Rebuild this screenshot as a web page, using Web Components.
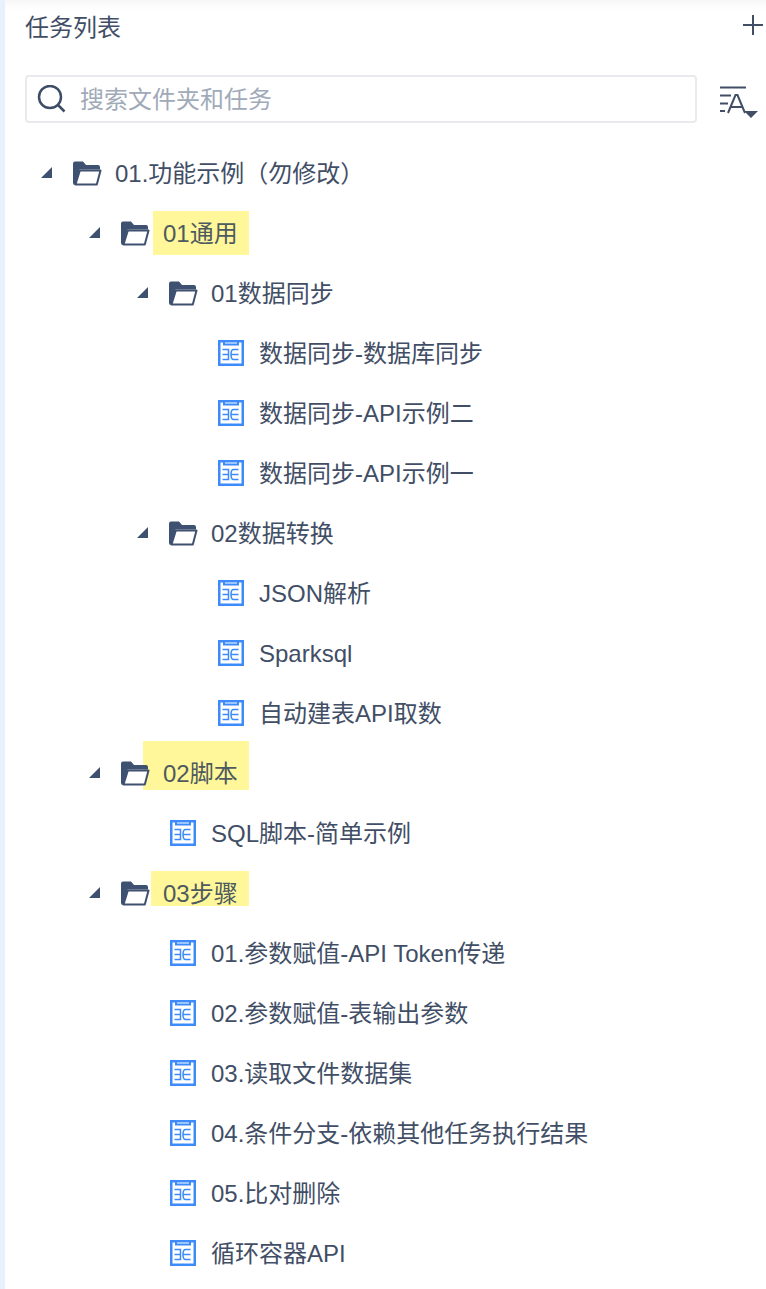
<!DOCTYPE html>
<html lang="zh">
<head>
<meta charset="utf-8">
<style>
  html, body { margin: 0; padding: 0; background: #fff; }
  body { font-family: "Liberation Sans", "Noto Sans CJK SC", sans-serif; }
</style>
</head>
<body>
<task-panel title="任务列表">
  <tree-row kind="folder" depth="0">01.功能示例（勿修改）</tree-row>
  <tree-row kind="folder" depth="1" mark="148,8,96,44">01通用</tree-row>
  <tree-row kind="folder" depth="2">01数据同步</tree-row>
  <tree-row kind="task" depth="3">数据同步-数据库同步</tree-row>
  <tree-row kind="task" depth="3">数据同步-API示例二</tree-row>
  <tree-row kind="task" depth="3">数据同步-API示例一</tree-row>
  <tree-row kind="folder" depth="2">02数据转换</tree-row>
  <tree-row kind="task" depth="3">JSON解析</tree-row>
  <tree-row kind="task" depth="3">Sparksql</tree-row>
  <tree-row kind="task" depth="3">自动建表API取数</tree-row>
  <tree-row kind="folder" depth="1" mark="138,-2,106,49">02脚本</tree-row>
  <tree-row kind="task" depth="2">SQL脚本-简单示例</tree-row>
  <tree-row kind="folder" depth="1" mark="146,8,98,35">03步骤</tree-row>
  <tree-row kind="task" depth="2">01.参数赋值-API Token传递</tree-row>
  <tree-row kind="task" depth="2">02.参数赋值-表输出参数</tree-row>
  <tree-row kind="task" depth="2">03.读取文件数据集</tree-row>
  <tree-row kind="task" depth="2">04.条件分支-依赖其他任务执行结果</tree-row>
  <tree-row kind="task" depth="2">05.比对删除</tree-row>
  <tree-row kind="task" depth="2">循环容器API</tree-row>
</task-panel>

<script>
class TaskPanel extends HTMLElement {
  constructor() {
    super();
    this.attachShadow({ mode: 'open' });
  }

  connectedCallback() {
    const title = this.getAttribute('title') || '';
    this.shadowRoot.innerHTML = `
      <style>
        :host {
          display: block;
          box-sizing: border-box;
          height: 1289px;
          overflow: hidden;
          border-left: 5px solid #e8f0fe;
          color: #414e66;
          background: linear-gradient(#f7f7f8, #fff 10px);
        }
        .head {
          display: flex;
          justify-content: space-between;
          align-items: center;
          height: 54px;
          padding: 0 3px 0 20px;
        }
        .title { font-size: 24px; line-height: 30px; margin-top: 2px; }
        .plus { margin-top: -4px; }
        .tools {
          display: flex;
          align-items: center;
          gap: 23px;
          height: 48px;
          padding-left: 20px;
          margin-top: 21px;
        }
        .search {
          flex: none;
          box-sizing: border-box;
          width: 672px;
          height: 48px;
          display: flex;
          align-items: center;
          gap: 14px;
          padding-left: 10px;
          border: 2px solid #e8eaee;
          border-radius: 4px;
          font-size: 24px;
          line-height: 30px;
          color: #a0aab8;
        }
        .search span { margin-top: 2px; }
        .sort { margin-top: 8px; }
        svg { display: block; flex: none; }
        .tree { padding-top: 20px; }
      </style>
      <div class="head">
        <span class="title">${title}</span>
        <svg class="plus" width="20" height="20" viewBox="0 0 20 20"><path d="M0 10H20M10 0V20" stroke="#414e66" stroke-width="2"/></svg>
      </div>
      <div class="tools">
        <div class="search">
          <svg width="29" height="28" viewBox="0 0 29 28" fill="none" stroke="#3d4d68" stroke-width="2.500"><circle cx="13" cy="12" r="11"/><path d="M21 20l6.500 6.500"/></svg>
          <span>搜索文件夹和任务</span>
        </div>
        <svg class="sort" width="40" height="34" viewBox="0 0 40 34">
          <path d="M0 1.500H26M0 9.500H11M0 17.500H8M0 25H5" stroke="#414e66" stroke-width="2"/>
          <path d="M8 27L15.500 9H17.500L25 27M11 21H22" stroke="#414e66" stroke-width="2" fill="none"/>
          <path d="M24 25H38L31 32Z" fill="#414e66"/>
        </svg>
      </div>
      <div class="tree"><slot></slot></div>
    `;
  }
}

class TreeRow extends HTMLElement {
  constructor() {
    super();
    this.attachShadow({ mode: 'open' });
  }

  connectedCallback() {
    const depth = Number(this.getAttribute('depth') || 0);
    const kind = this.getAttribute('kind');
    const folder = `<svg class="ico" width="30" height="26" viewBox="0 0 30 26">
      <path d="M1 3.500A2 2 0 0 1 3 1.500H11L14 5H26A2 2 0 0 1 28 7V9.500H7.500L3.500 25H3A2 2 0 0 1 1 23Z" fill="#3e5170"/>
      <path d="M7.800 10.500H28.500L24.800 24.500H3.500Z" fill="#fff" stroke="#3e5170" stroke-width="2" stroke-linejoin="round"/>
    </svg>`;
    const task = `<svg class="ico" width="26" height="26" viewBox="0 0 26 26" fill="none" stroke="#3d8bfa" stroke-width="2">
      <rect x="1.250" y="1.250" width="23.500" height="23.500" stroke-width="2.500"/>
      <path d="M6 1V4.500H20V1"/>
      <path d="M20.500 9.500H15.500C13.500 9.500 13 11 13 14.500C13 18 13.500 19.500 15.500 19.500H20.500M4.500 9.500H10.500V19.500H4.500M4.500 14.500H10.500M13 14.500H20.500" stroke-width="1.500"/>
    </svg>`;
    const arrow = `<svg class="arrow" width="11" height="11" viewBox="0 0 11 11"><path d="M11 0V11H0Z" fill="#3e5170"/></svg>`;
    // mark = left,top,width,height relative to this row
    const mark = this.getAttribute('mark');
    let markEl = '';
    if (mark) {
      const [l, t, w, h] = mark.split(',').map(Number);
      markEl = `<span class="mark" style="left:${l}px;top:${t}px;width:${w}px;height:${h}px"></span>`;
    }
    const indent = kind === 'folder' ? 36 + depth * 48 : 69 + depth * 48;
    this.shadowRoot.innerHTML = `
      <style>
        :host {
          display: block;
          position: relative;
          height: 60px;
          font-size: 24px;
          color: #414e66;
        }
        .row {
          position: relative;
          display: flex;
          align-items: center;
          height: 60px;
        }
        .arrow { flex: none; margin-right: 20px; margin-bottom: 1px; }
        .ico { flex: none; }
        .folder { margin-right: 13px; }
        .task { margin-right: 15px; }
        .mark { position: absolute; background: #fff799; }
        .text { position: relative; white-space: nowrap; line-height: 30px; margin-top: 2px; }
        :host([mark]) .text { color: #4d5a5f; }
        svg { display: block; }
      </style>
      ${markEl}
      <div class="row" style="padding-left:${indent}px">
        ${kind === 'folder' ? arrow : ''}
        <span class="${kind}">${kind === 'folder' ? folder : task}</span>
        <span class="text"><slot></slot></span>
      </div>
    `;
  }
}

customElements.define('task-panel', TaskPanel);
customElements.define('tree-row', TreeRow);
</script>
</body>
</html>
